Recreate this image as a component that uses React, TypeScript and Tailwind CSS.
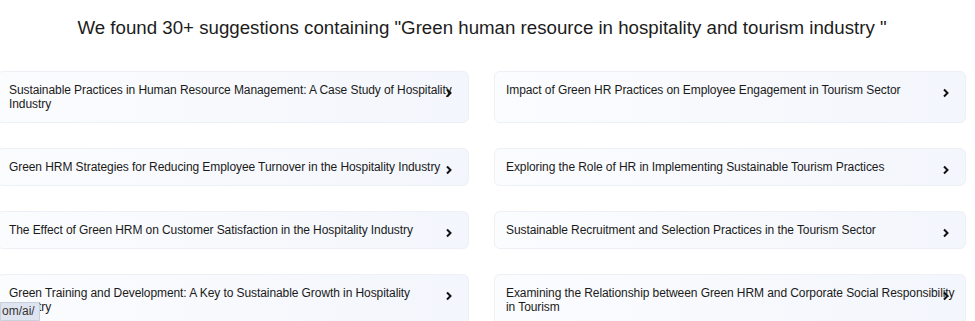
const suggestions = [
  'Sustainable Practices in Human Resource Management: A Case Study of Hospitality\nIndustry',
  'Impact of Green HR Practices on Employee Engagement in Tourism Sector',
  'Green HRM Strategies for Reducing Employee Turnover in the Hospitality Industry',
  'Exploring the Role of HR in Implementing Sustainable Tourism Practices',
  'The Effect of Green HRM on Customer Satisfaction in the Hospitality Industry',
  'Sustainable Recruitment and Selection Practices in the Tourism Sector',
  'Green Training and Development: A Key to Sustainable Growth in Hospitality\nIndustry',
  'Examining the Relationship between Green HRM and Corporate Social Responsibility\nin Tourism',
];

function Chevron() {
  return (
    <svg width="8" height="10" viewBox="0 0 8 10" className="absolute right-[15px] top-[16px]">
      <path d="M2 1.5 L5.5 5 L2 8.5" fill="none" stroke="#111" strokeWidth="2" />
    </svg>
  );
}

export default function App() {
  return (
    <div className="relative h-[321px] w-[975px] overflow-hidden bg-white font-['Liberation_Sans',Arial,sans-serif]">
      <h1 className="mr-[11px] pt-[17px] text-center text-[18.7px] leading-[22px] text-[#1c1c1c]">
        We found 30+ suggestions containing "Green human resource in hospitality and tourism industry "
      </h1>

      <div className="ml-[-3px] mt-[32px] grid w-[969px] grid-cols-2 gap-x-[25px] gap-y-[25px]">
        {suggestions.map((s) => (
          <a
            key={s}
            href="#"
            className="relative whitespace-pre-line rounded-[6px] border border-[#edf0f5] bg-gradient-to-r from-[#fbfcfe] to-[#f3f6fc] py-[11px] pl-[11px] pr-[2px] text-[12px] leading-[14px] tracking-[-0.08px] text-[#1a1a1a]"
          >
            {s}
            <Chevron />
          </a>
        ))}
      </div>

      {/* browser status tooltip */}
      <div className="absolute bottom-0 left-0 flex h-[19px] w-[40px] items-center rounded-tr-[3px] border border-[#c9cfdd] bg-[#dfe4f1] pl-[1px] text-[12px] leading-[15px] text-[#333]">
        om/ai/
      </div>
    </div>
  );
}
